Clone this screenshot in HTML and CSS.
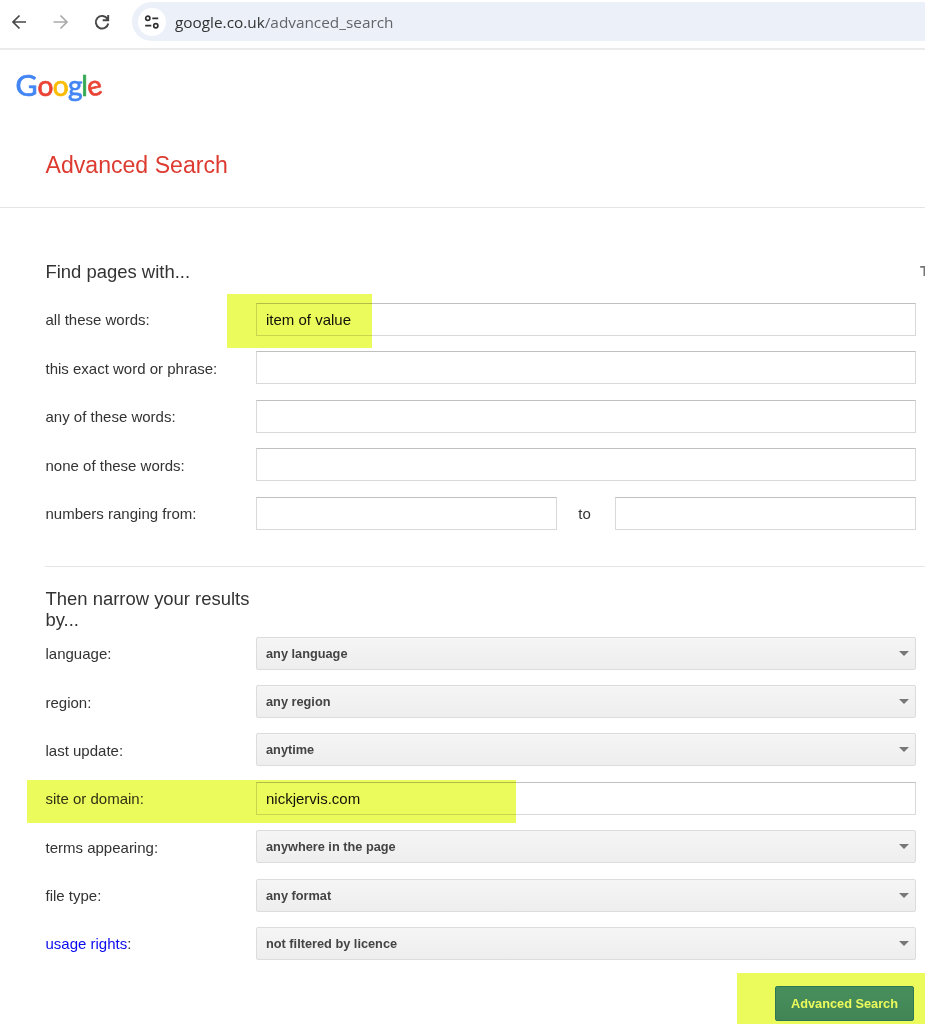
FILE: index.html
```html
<!DOCTYPE html>
<html lang="en">
<head>
    <meta charset="utf-8" />
    <meta name="viewport" content="width=device-width, initial-scale=1.0" />
    <title>Google Advanced Search</title>
    <!-- Stylesheet -->
    <link rel="stylesheet" href="styles.css">
</head>
<body>
    <!-- Browser bar -->
    <div class="toolbar">
        <svg class="nav-icons" width="120" height="44" viewBox="0 0 120 44" fill="none" stroke-width="1.7">
            <path d="M26 22H13.5M19.5 15.5L13 22l6.5 6.5" stroke="#474747" />
            <path d="M53.5 22H66.5M60.5 15.5L67 22l-6.5 6.5" stroke="#aaa" />
            <path d="M107.500 18.900A6.300 6.300 0 1 0 108.300 23.500M108.200 15v5.200H102.700" stroke="#474747" stroke-width="1.900" />
        </svg>
        <div class="address">
            <span class="site-info">
                <svg width="16" height="16" viewBox="0 0 16 16" fill="none" stroke="#303030" stroke-width="1.7">
                    <circle cx="3.800" cy="4.300" r="2.100" />
                    <path d="M8.300 4.300H14.200M1.200 11.700H7.300" />
                    <circle cx="11.800" cy="11.700" r="2.100" />
                </svg>
            </span>
            <span class="url">google.co.uk<span class="path">/advanced_search</span></span>
        </div>
    </div>

    <header>
        <svg class="logo" width="90" height="36" viewBox="0 0 90 36">
            <text class="g1" transform="translate(-0.6 25.5) scale(1.08 1)">G</text>
            <text class="o1" x="21.500" y="25.500">o</text>
            <text class="o2" x="36.700" y="25.500">o</text>
            <text class="g2" x="51.900" y="25.500">g</text>
            <text class="l" x="65.200" y="25.500">l</text>
            <text class="e" x="71.400" y="25.500" transform="rotate(-12 78.500 18.500)">e</text>
        </svg>
        <h1>Advanced Search</h1>
    </header>

    <form class="search-form">
        <div class="section-head">
            <h2>Find pages with...</h2>
            <span class="hint-head">T</span>
        </div>
        <div class="row">
            <label for="all">all these words:</label>
            <input type="text" id="all" class="field" value="item of value" />
            <span class="marker marker-words"></span>
        </div>
        <div class="row">
            <label for="exact">this exact word or phrase:</label>
            <input type="text" id="exact" class="field" />
        </div>
        <div class="row">
            <label for="any">any of these words:</label>
            <input type="text" id="any" class="field" />
        </div>
        <div class="row">
            <label for="none">none of these words:</label>
            <input type="text" id="none" class="field" />
        </div>
        <div class="row">
            <label for="low">numbers ranging from:</label>
            <input type="text" id="low" class="field" />
            <span class="to">to</span>
            <input type="text" id="high" class="field" />
        </div>

        <h2 class="narrow"><span>Then narrow your results by...</span></h2>
        <div class="row">
            <label>language:</label>
            <button type="button" class="select">any language</button>
        </div>
        <div class="row">
            <label>region:</label>
            <button type="button" class="select">any region</button>
        </div>
        <div class="row">
            <label>last update:</label>
            <button type="button" class="select">anytime</button>
        </div>
        <div class="row">
            <label for="site">site or domain:</label>
            <input type="text" id="site" class="field" value="nickjervis.com" />
            <span class="marker marker-site"></span>
        </div>
        <div class="row">
            <label>terms appearing:</label>
            <button type="button" class="select">anywhere in the page</button>
        </div>
        <div class="row">
            <label>file type:</label>
            <button type="button" class="select">any format</button>
        </div>
        <div class="row">
            <label><a href="#">usage rights</a>:</label>
            <button type="button" class="select">not filtered by licence</button>
        </div>
        <div class="actions">
            <button type="submit" class="submit">Advanced Search</button>
            <span class="marker marker-submit"></span>
        </div>
    </form>
</body>
</html>
```

FILE: styles.css
```css
* {
    padding: 0;
    margin: 0;
    box-sizing: border-box;
}

body {
    height: 1024px;
    overflow: hidden;
    background: #fff;
    color: #333;
    font-family: "Liberation Sans", Arial, sans-serif;
    font-size: 15px;
}

/* browser bar */
.toolbar {
    display: flex;
    height: 50px;
    padding-top: 2px;
    border-bottom: 2px solid #ebebeb;
}

.nav-icons {
    margin-top: -2px;
}

.address {
    display: flex;
    flex: 1;
    align-items: center;
    height: 39px;
    margin-left: 12px;
    padding-left: 6px;
    border-radius: 20px 0 0 20px;
    background: #ecf0f9;
}

.site-info {
    display: flex;
    align-items: center;
    justify-content: center;
    width: 28px;
    height: 28px;
    border-radius: 50%;
    background: #fff;
}

.url {
    margin-left: 9px;
    color: #333;
    font-family: "Open Sans", sans-serif;
    font-size: 15.35px;
}

.path {
    color: #636569;
}

/* page header */
header {
    height: 158px;
    padding: 20px 0 0 16px;
    border-bottom: 1px solid #e5e5e5;
}

.logo {
    display: block;
    overflow: visible;
    font-family: Lato, sans-serif;
    font-size: 28px;
    stroke-width: 0.7px;
}

.g1,
.g2 {
    fill: #4285f4;
    stroke: #4285f4;
}

.o1,
.e {
    fill: #ea4335;
    stroke: #ea4335;
}

.o2 {
    fill: #fbbc05;
    stroke: #fbbc05;
}

.l {
    fill: #34a853;
    stroke: #34a853;
}

h1 {
    margin: 46px 0 0 29.5px;
    color: #dd3b30;
    font-size: 23.1px;
    font-weight: normal;
    line-height: 27px;
}

h2 {
    font-size: 18.45px;
    font-weight: normal;
    line-height: 21.5px;
}

/* form */
.search-form {
    padding: 53px 0 0 45px;
}

.section-head {
    display: flex;
    justify-content: space-between;
    height: 34.3px;
}

.section-head h2 {
    padding-left: 0.5px;
}

.hint-head {
    width: 5px;
    color: #777;
    font-weight: bold;
    line-height: 20px;
}

.row {
    position: relative;
    display: flex;
    align-items: center;
    height: 48.4px;
    padding-right: 9px;
}

.row label {
    width: 211px;
    padding: 1px 0 0 0.5px;
}

.row a {
    color: #0a0aee;
    text-decoration: none;
}

.field {
    flex: 1;
    min-width: 0;
    height: 33px;
    padding: 0 9px;
    border: 1px solid #d9d9d9;
    border-top-color: #c0c0c0;
    color: #111;
    font: inherit;
    outline: none;
}

.to {
    width: 58px;
    padding-right: 3px;
    text-align: center;
}

.select {
    display: flex;
    flex: 1;
    align-items: center;
    justify-content: space-between;
    height: 33px;
    padding: 0 6px 0 9px;
    border: 1px solid #dcdcdc;
    border-radius: 2px;
    background: linear-gradient(#f5f5f5, #eee);
    color: #444;
    font: bold 12.75px "Liberation Sans", Arial, sans-serif;
}

.select::after {
    content: "";
    border: 4.5px solid transparent;
    border-width: 5px 5px 0;
    border-top-color: #777;
}

.narrow {
    height: 63.4px;
    margin-top: 28.3px;
    padding-top: 21px;
    border-top: 1px solid #e5e5e5;
}

.narrow span {
    display: block;
    width: 210px;
    padding-left: 0.5px;
}

.actions {
    position: relative;
    display: flex;
    justify-content: flex-end;
    padding: 18px 11px 0 0;
}

.submit {
    width: 139px;
    height: 35px;
    border: 1px solid #3079ed;
    border-radius: 2px;
    background: linear-gradient(#4d90fe, #4787ed);
    color: #fff;
    font: bold 12.75px "Liberation Sans", Arial, sans-serif;
}

/* highlighter strokes laid over the form */
.marker {
    position: absolute;
    background: #ecfb5c;
    mix-blend-mode: multiply;
    pointer-events: none;
}

.marker-words {
    top: -1px;
    left: 182px;
    width: 145px;
    height: 54px;
}

.marker-site {
    top: 6px;
    left: -18px;
    width: 489px;
    height: 43px;
}

.marker-submit {
    top: 5px;
    right: 0;
    width: 188px;
    height: 52px;
}
```
